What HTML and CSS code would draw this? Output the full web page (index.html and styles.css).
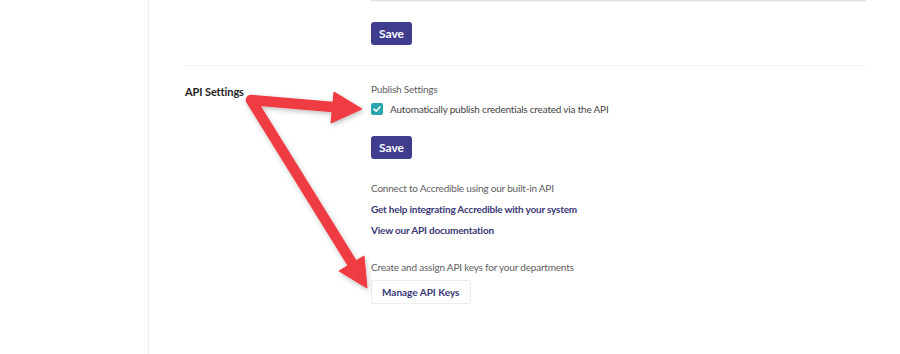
FILE: index.html
```html
<!DOCTYPE html>
<html lang="en">
<head>
    <meta charset="UTF-8">
    <meta name="viewport" content="width=device-width, initial-scale=1.0">
    <title>API Settings</title>
    <link rel="stylesheet" href="styles.css">
</head>
<body>

<div class="page">
    <div class="sidebar"></div>

    <div class="main">
        <div class="row">
            <div class="label"></div>
            <div class="content">
                <div class="field-edge"></div>
                <button class="btn-primary">Save</button>
            </div>
        </div>

        <div class="divider"></div>

        <div class="row api">
            <div class="label">API Settings</div>
            <div class="content">
                <div class="caption">Publish Settings</div>
                <label class="check">
                    <span class="box">
                        <svg width="12" height="12" viewBox="0 0 12 12"><path d="M3 6.2 L5.1 8.2 L9 4" fill="none" stroke="#fff" stroke-width="1.6" stroke-linecap="round" stroke-linejoin="round"/></svg>
                    </span>
                    Automatically publish credentials created via the API
                </label>
                <button class="btn-primary">Save</button>

                <div class="caption connect">Connect to Accredible using our built-in API</div>
                <a class="link" href="#">Get help integrating Accredible with your system</a>
                <a class="link" href="#">View our API documentation</a>

                <div class="caption keys">Create and assign API keys for your departments</div>
                <button class="btn-outline">Manage API Keys</button>
            </div>
        </div>
    </div>

    <!-- annotation arrows drawn over the page -->
    <svg class="arrows" width="900" height="354" viewBox="0 0 900 354">
        <defs>
            <filter id="shadow" x="-20%" y="-20%" width="140%" height="140%">
                <feDropShadow dx="1" dy="2" stdDeviation="2.5" flood-color="#000" flood-opacity="0.25"/>
            </filter>
        </defs>
        <g filter="url(#shadow)" fill="#ef3b42" stroke="#ef3b42">
            <polyline points="333,107 251,100 352,263" fill="none" stroke-width="10.5" stroke-linejoin="round" stroke-linecap="round"/>
            <polygon points="331,123 334,92 362,109" stroke-width="1" stroke-linejoin="round"/>
            <polygon points="339,271 364,256 367,288" stroke-width="1" stroke-linejoin="round"/>
        </g>
    </svg>
</div>

</body>
</html>
```

FILE: styles.css
```css
body {
    margin: 0;
    background: #fff;
    font-family: Lato, "Open Sans", sans-serif;
    color: #444;
}
.page {
    position: relative;
    display: flex;
    width: 900px;
    height: 354px;
    overflow: hidden;
}
.sidebar {
    width: 148px;
    flex-shrink: 0;
    border-right: 1px solid #efefef;
}
.main {
    flex: 1;
    padding: 0 34px 0 36px;
}
.row {
    display: flex;
}
.label {
    width: 186px;
    flex-shrink: 0;
    font-size: 11px;
    letter-spacing: -0.1px;
    font-weight: bold;
    color: #222;
}
.content {
    flex: 1;
}
.field-edge {
    height: 1px;
    background: #e2e2e2;
    box-shadow: 0 1px 1px rgba(0, 0, 0, 0.05);
    margin-bottom: 21px;
}
.btn-primary {
    display: block;
    height: 23px;
    padding: 0 8px;
    border: none;
    border-radius: 3px;
    background: #403d8f;
    color: #fff;
    font-family: inherit;
    font-size: 12px;
    font-weight: bold;
}
.divider {
    height: 1px;
    background: #f3f3f3;
    margin: 20px 0 15px;
}
.api .label {
    padding-top: 4px;
}
.caption {
    font-size: 10px;
    letter-spacing: -0.2px;
    color: #606060;
    line-height: 15px;
    padding-top: 1px;
}
.check {
    display: flex;
    align-items: center;
    gap: 7px;
    margin: 6px 0 21px;
    font-size: 10px;
    letter-spacing: -0.2px;
    color: #444;
}
.box {
    width: 12px;
    height: 12px;
    border-radius: 2px;
    background: #2aa7ae;
    display: flex;
}
.connect {
    margin-top: 21px;
}
.link {
    display: block;
    margin-top: 6px;
    font-size: 10px;
    letter-spacing: -0.2px;
    line-height: 15px;
    font-weight: bold;
    color: #3a3876;
    text-decoration: none;
}
.keys {
    margin-top: 21px;
}
.btn-outline {
    display: block;
    margin-top: 5px;
    height: 24px;
    padding: 0 10px;
    border: 1px solid #ececec;
    border-radius: 2px;
    background: #fff;
    color: #3a3876;
    font-family: inherit;
    font-size: 10px;
    font-weight: bold;
}
.arrows {
    position: absolute;
    left: 0;
    top: 0;
    pointer-events: none;
}
```
